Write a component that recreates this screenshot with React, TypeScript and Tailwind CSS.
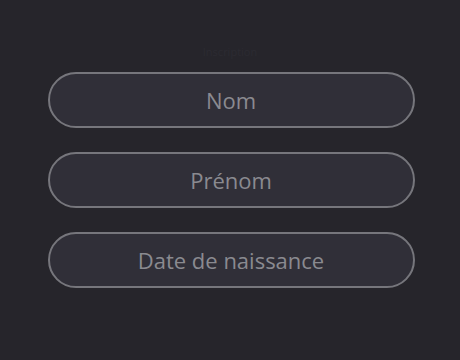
import React from 'react';

const fields = ['Nom', 'Prénom', 'Date de naissance'];

export default function App() {
  return (
    <div className="min-h-screen w-full bg-[#26252b] flex flex-col items-center pt-[44px] font-['Open_Sans',sans-serif]">
      {/* faded title above the form */}
      <div className="h-[16px] w-[66px] text-[11px] text-[#2c2b32] text-center leading-[16px]">Inscription</div>
      <div className="mt-[12px] ml-[2px] flex flex-col gap-[24px]">
        {fields.map((f) => (
          <input
            key={f}
            type="text"
            placeholder={f}
            className="w-[367px] h-[56px] rounded-full border-2 border-[#76767c] bg-[#302f38] text-center text-[22px] font-medium text-[#8a8a90] placeholder:text-[#8a8a90] outline-none"
          />
        ))}
      </div>
    </div>
  );
}
